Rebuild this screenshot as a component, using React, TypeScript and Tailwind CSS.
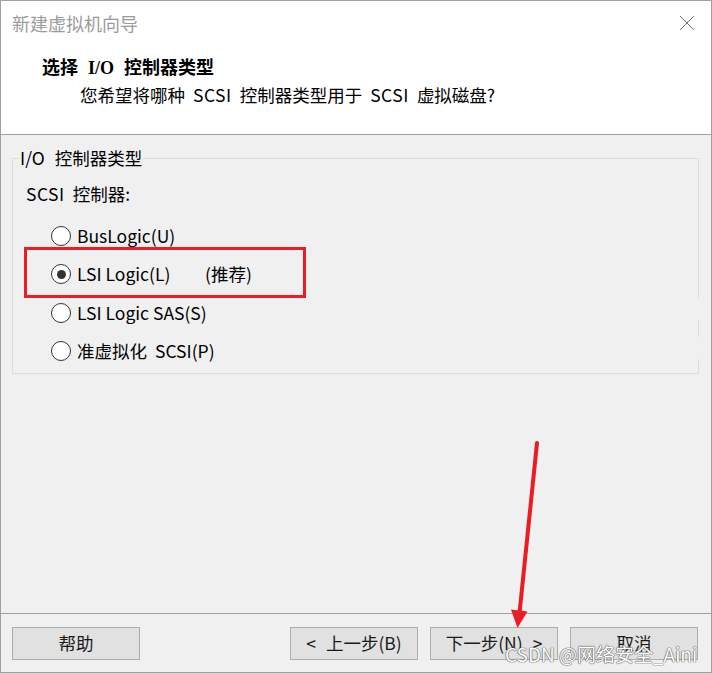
import React from "react";

const font = { fontFamily: '"Noto Sans CJK SC", "Noto Sans", sans-serif' };

function Radio({ checked }: { checked?: boolean }) {
  return (
    <span className="w-[20px] h-[20px] rounded-full border border-[#333333] bg-white flex items-center justify-center shrink-0">
      {checked && <span className="w-[9px] h-[9px] rounded-full bg-[#333333]" />}
    </span>
  );
}

function Btn({ children }: { children: React.ReactNode }) {
  return (
    <button className="w-[128px] h-[33px] border border-[#adadad] bg-[#e1e1e1] text-[17.5px] text-[#1a1a1a] flex items-center justify-center whitespace-nowrap">
      {children}
    </button>
  );
}

function Latin({ children }: { children: React.ReactNode }) {
  return <span className="inline-block mx-[8px] tracking-[0.5px]">{children}</span>;
}

export default function App() {
  const options = [
    { label: "BusLogic(U)", h: "h-[38px]" },
    { label: "LSI Logic(L)", h: "h-[38px]", checked: true, note: "(推荐)" },
    { label: "LSI Logic SAS(S)", h: "h-[39px]" },
    { label: "准虚拟化 SCSI(P)", h: "h-[38px]" },
  ];

  return (
    <div
      className="w-[712px] h-[673px] border border-[#a0a0a0] flex flex-col relative bg-[#f0f0f0] text-black overflow-hidden"
      style={font}
    >
      {/* header */}
      <div className="h-[134px] bg-white border-b border-[#a0a0a0] flex flex-col shrink-0">
        <div className="mt-[9px] h-[26px] flex items-center justify-between pl-[11px] pr-[16px]">
          <span className="text-[18px] leading-[26px] text-[#9b9b9b]">新建虚拟机向导</span>
          <svg width="16" height="16" viewBox="0 0 16 16">
            <path d="M1 1 L15 15 M15 1 L1 15" stroke="#707070" strokeWidth="1" fill="none" />
          </svg>
        </div>
        <div
          className="mt-[20px] pl-[41px] h-[24px] leading-[24px] text-[18px] font-bold whitespace-nowrap"
          style={{ fontFamily: '"Liberation Serif", "Noto Sans CJK SC", serif' }}
        >
          选择<span className="inline-block mx-[10px]">I/O</span>控制器类型
        </div>
        <div className="mt-[3px] pl-[79px] h-[24px] leading-[24px] text-[17.5px] whitespace-nowrap">
          您希望将哪种<Latin>SCSI</Latin>控制器类型用于<Latin>SCSI</Latin>虚拟磁盘?
        </div>
      </div>

      {/* body */}
      <div className="flex-1 pl-[11px] pr-[12px]">
        <div className="mt-[23px] h-[216px] border border-[#dcdcdc] relative">
          <span className="absolute left-[6px] top-[-13px] px-[1px] bg-[#f0f0f0] text-[17.5px] leading-[24px] whitespace-nowrap">
            I/O<span className="inline-block w-[10px]" />控制器类型
          </span>
          {/* gaps in the right border, as in the capture */}
          <span className="absolute right-[-1px] top-[139px] w-[1px] h-[22px] bg-[#f0f0f0]" />
          <span className="absolute right-[-1px] top-[178px] w-[1px] h-[22px] bg-[#f0f0f0]" />
          <div className="pt-[23px] pl-[13px]">
            <div className="h-[24px] leading-[24px] text-[17.5px] whitespace-nowrap">
              <span className="tracking-[0.5px]">SCSI</span>
              <span className="inline-block w-[8px]" />
              控制器:
            </div>
            <div className="mt-[11px] pl-[25px] flex flex-col">
              {options.map((o) => (
                <div key={o.label} className={`${o.h} flex items-center`}>
                  <Radio checked={o.checked} />
                  <span className="ml-[6px] text-[17.5px] leading-[24px] w-[128px] whitespace-nowrap">
                    {o.label === "准虚拟化 SCSI(P)" ? (
                      <>
                        准虚拟化<span className="inline-block w-[8px]" />SCSI(P)
                      </>
                    ) : (
                      o.label
                    )}
                  </span>
                  {o.note && <span className="text-[17.5px] leading-[24px]">{o.note}</span>}
                </div>
              ))}
            </div>
          </div>
        </div>
      </div>

      {/* footer */}
      <div className="h-[59px] border-t border-[#a0a0a0] pt-[13px] pl-[11px] pr-[13px] flex shrink-0">
        <Btn>帮助</Btn>
        <div className="ml-auto flex gap-[12px]">
          <Btn>
            &lt;<span className="inline-block w-[10px]" />上一步(B)
          </Btn>
          <Btn>
            下一步(N)<span className="inline-block w-[10px]" />&gt;
          </Btn>
          <Btn>取消</Btn>
        </div>
      </div>

      {/* annotations */}
      <div className="absolute left-[23px] top-[246px] w-[282px] h-[51px] border-[3px] border-[#ec1c24]" />
      <svg className="absolute left-0 top-0 pointer-events-none" width="712" height="673">
        <line x1="536" y1="442" x2="518.5" y2="612" stroke="#ec1c24" strokeWidth="4" strokeLinecap="round" />
        <polygon points="516.5,627 510,608.5 526.5,610.5" fill="#ec1c24" />
      </svg>
      <span
        className="absolute left-[504px] top-[640px] text-[19px] leading-[26px] text-white whitespace-nowrap"
        style={{ textShadow: "0 0 1px #555, 0 0 1px #555, 0 0 1px #555" }}
      >
        CSDN @网络安全_Aini
      </span>
    </div>
  );
}
